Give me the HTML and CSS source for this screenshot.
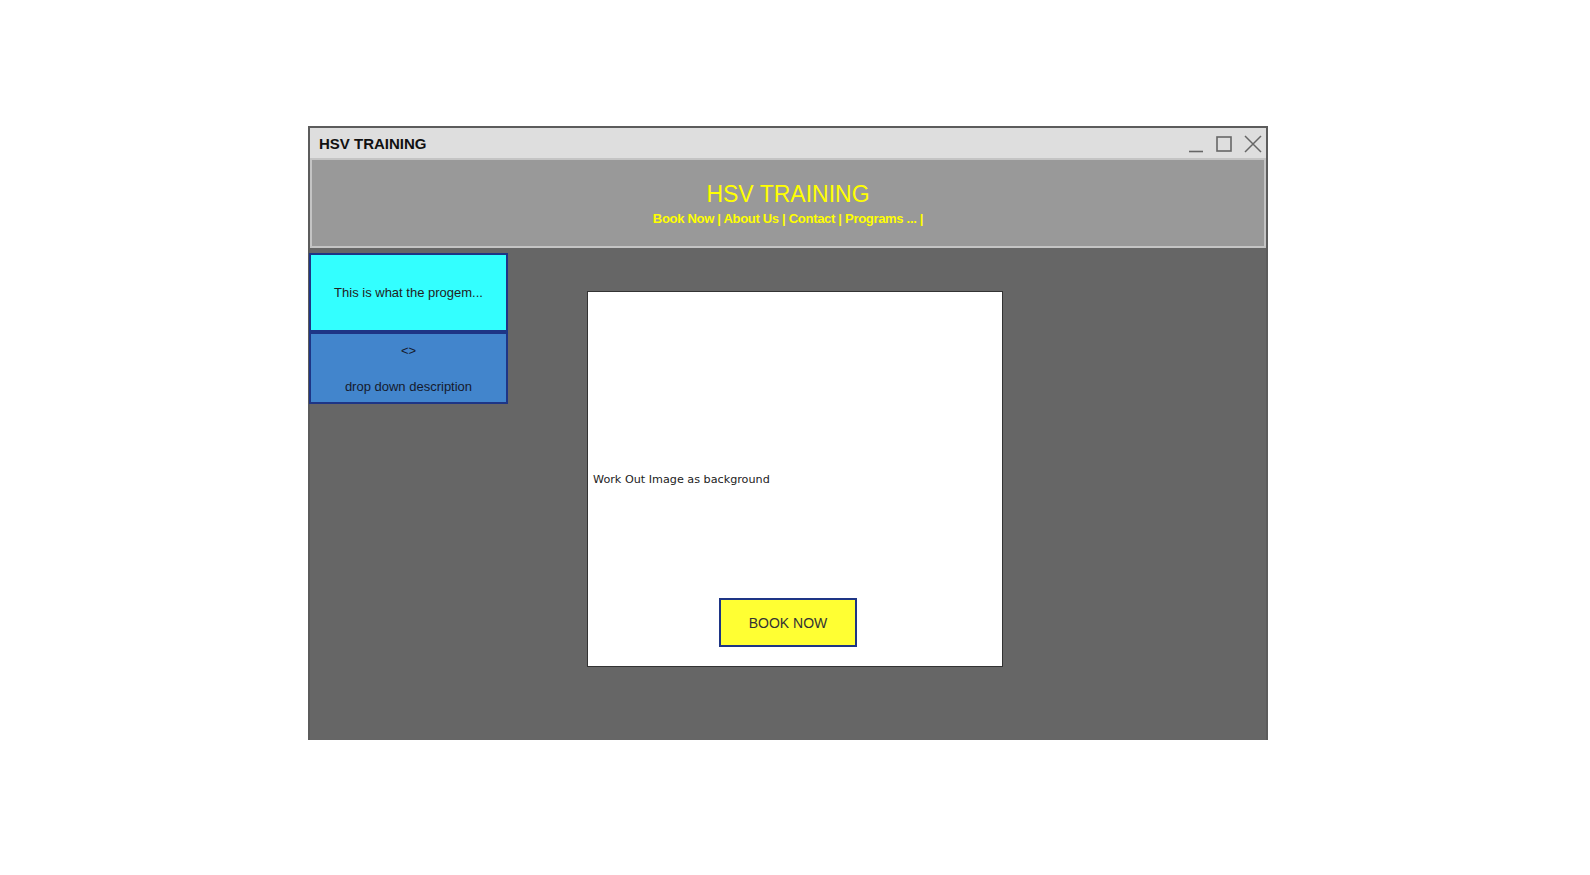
FILE: index.html
```html
<!DOCTYPE html>
<html>
<head>
<meta charset="utf-8">
<title>HSV TRAINING</title>
<link rel="stylesheet" href="styles.css">
</head>
<body>
<div class="window">
  <div class="titlebar">
    <span class="title">HSV TRAINING</span>
    <div class="controls">
      <svg class="ctl" width="16" height="18" viewBox="0 0 16 18"><path d="M1 16.5H15" stroke="#666" stroke-width="1.6" fill="none"/></svg>
      <svg class="ctl" width="16" height="18" viewBox="0 0 16 18"><rect x="1" y="2" width="14" height="14" stroke="#666" stroke-width="1.6" fill="none"/></svg>
      <svg class="ctl" width="18" height="18" viewBox="0 0 18 18"><path d="M1 1L17 17M17 1L1 17" stroke="#666" stroke-width="1.5" fill="none"/></svg>
    </div>
  </div>
  <div class="header">
    <div class="brand">HSV TRAINING</div>
    <div class="nav">Book Now | About Us | Contact | Programs ... |</div>
  </div>
  <div class="content">
    <div class="side">
      <div class="prog">This is what the progem...</div>
      <div class="drop">
        <span>&lt;&gt;</span>
        <span>drop down description</span>
      </div>
    </div>
    <div class="hero">
      <div class="hero-text">Work Out Image as background</div>
      <div class="hero-foot"><button class="book">BOOK NOW</button></div>
    </div>
  </div>
</div>
</body>
</html>
```
FILE: styles.css
```css
html, body {
  margin: 0;
  padding: 0;
  background: #ffffff;
}
body {
  font-family: "Liberation Sans", Arial, sans-serif;
  padding-top: 126px;
  padding-left: 308px;
}
.window {
  width: 960px;
  height: 614px;
  box-sizing: border-box;
  border: 2px solid #5c5c5c;
  border-bottom: none;
  display: flex;
  flex-direction: column;
  background: #666666;
}
.titlebar {
  height: 30px;
  background: #dedede;
  display: flex;
  align-items: center;
  justify-content: space-between;
  padding-left: 9px;
  padding-right: 4px;
}
.title {
  font-size: 15px;
  font-weight: bold;
  color: #111;
  padding-top: 1px;
}
.controls {
  display: flex;
  align-items: center;
  gap: 12px;
  padding-top: 1px;
}
.ctl { display: block; }
.header {
  height: 90px;
  box-sizing: border-box;
  background: #999999;
  border: 2px solid #c4c4c4;
  text-align: center;
  color: #ffff00;
  padding-top: 21px;
}
.brand {
  font-size: 23px;
  line-height: 26px;
}
.nav {
  margin-top: 4px;
  font-size: 13px;
  line-height: 16px;
  font-weight: bold;
  letter-spacing: -0.3px;
}
.content {
  flex: 1;
  display: flex;
  align-items: flex-start;
  padding-top: 5px;
  margin-left: -1px;
}
.side {
  width: 199px;
  display: flex;
  flex-direction: column;
}
.prog {
  height: 79px;
  box-sizing: border-box;
  background: #33ffff;
  border: 2px solid #1e3585;
  display: flex;
  align-items: center;
  justify-content: center;
  font-size: 13px;
  color: #222;
}
.drop {
  height: 72px;
  box-sizing: border-box;
  background: #4285cc;
  border: 2px solid #1e3585;
  display: flex;
  flex-direction: column;
  align-items: center;
  font-size: 13px;
  color: #151a2c;
  padding-top: 9px;
  gap: 21px;
}
.hero {
  margin-left: 79px;
  margin-top: 38px;
  width: 416px;
  height: 376px;
  box-sizing: border-box;
  background: #ffffff;
  border: 1px solid #333;
  display: grid;
  grid-template-rows: 1fr auto 1fr;
}
.hero-text {
  grid-row: 2;
  font-family: "DejaVu Sans", sans-serif;
  font-size: 11.2px;
  color: #222;
  padding-left: 5px;
}
.hero-foot {
  grid-row: 3;
  display: flex;
  align-items: flex-end;
  padding-left: 131px;
  padding-bottom: 19px;
}
.book {
  width: 138px;
  height: 49px;
  box-sizing: border-box;
  background: #ffff33;
  border: 2px solid #1e3585;
  font-family: "Liberation Sans", Arial, sans-serif;
  font-size: 14px;
  color: #333;
  padding: 0;
}
```
